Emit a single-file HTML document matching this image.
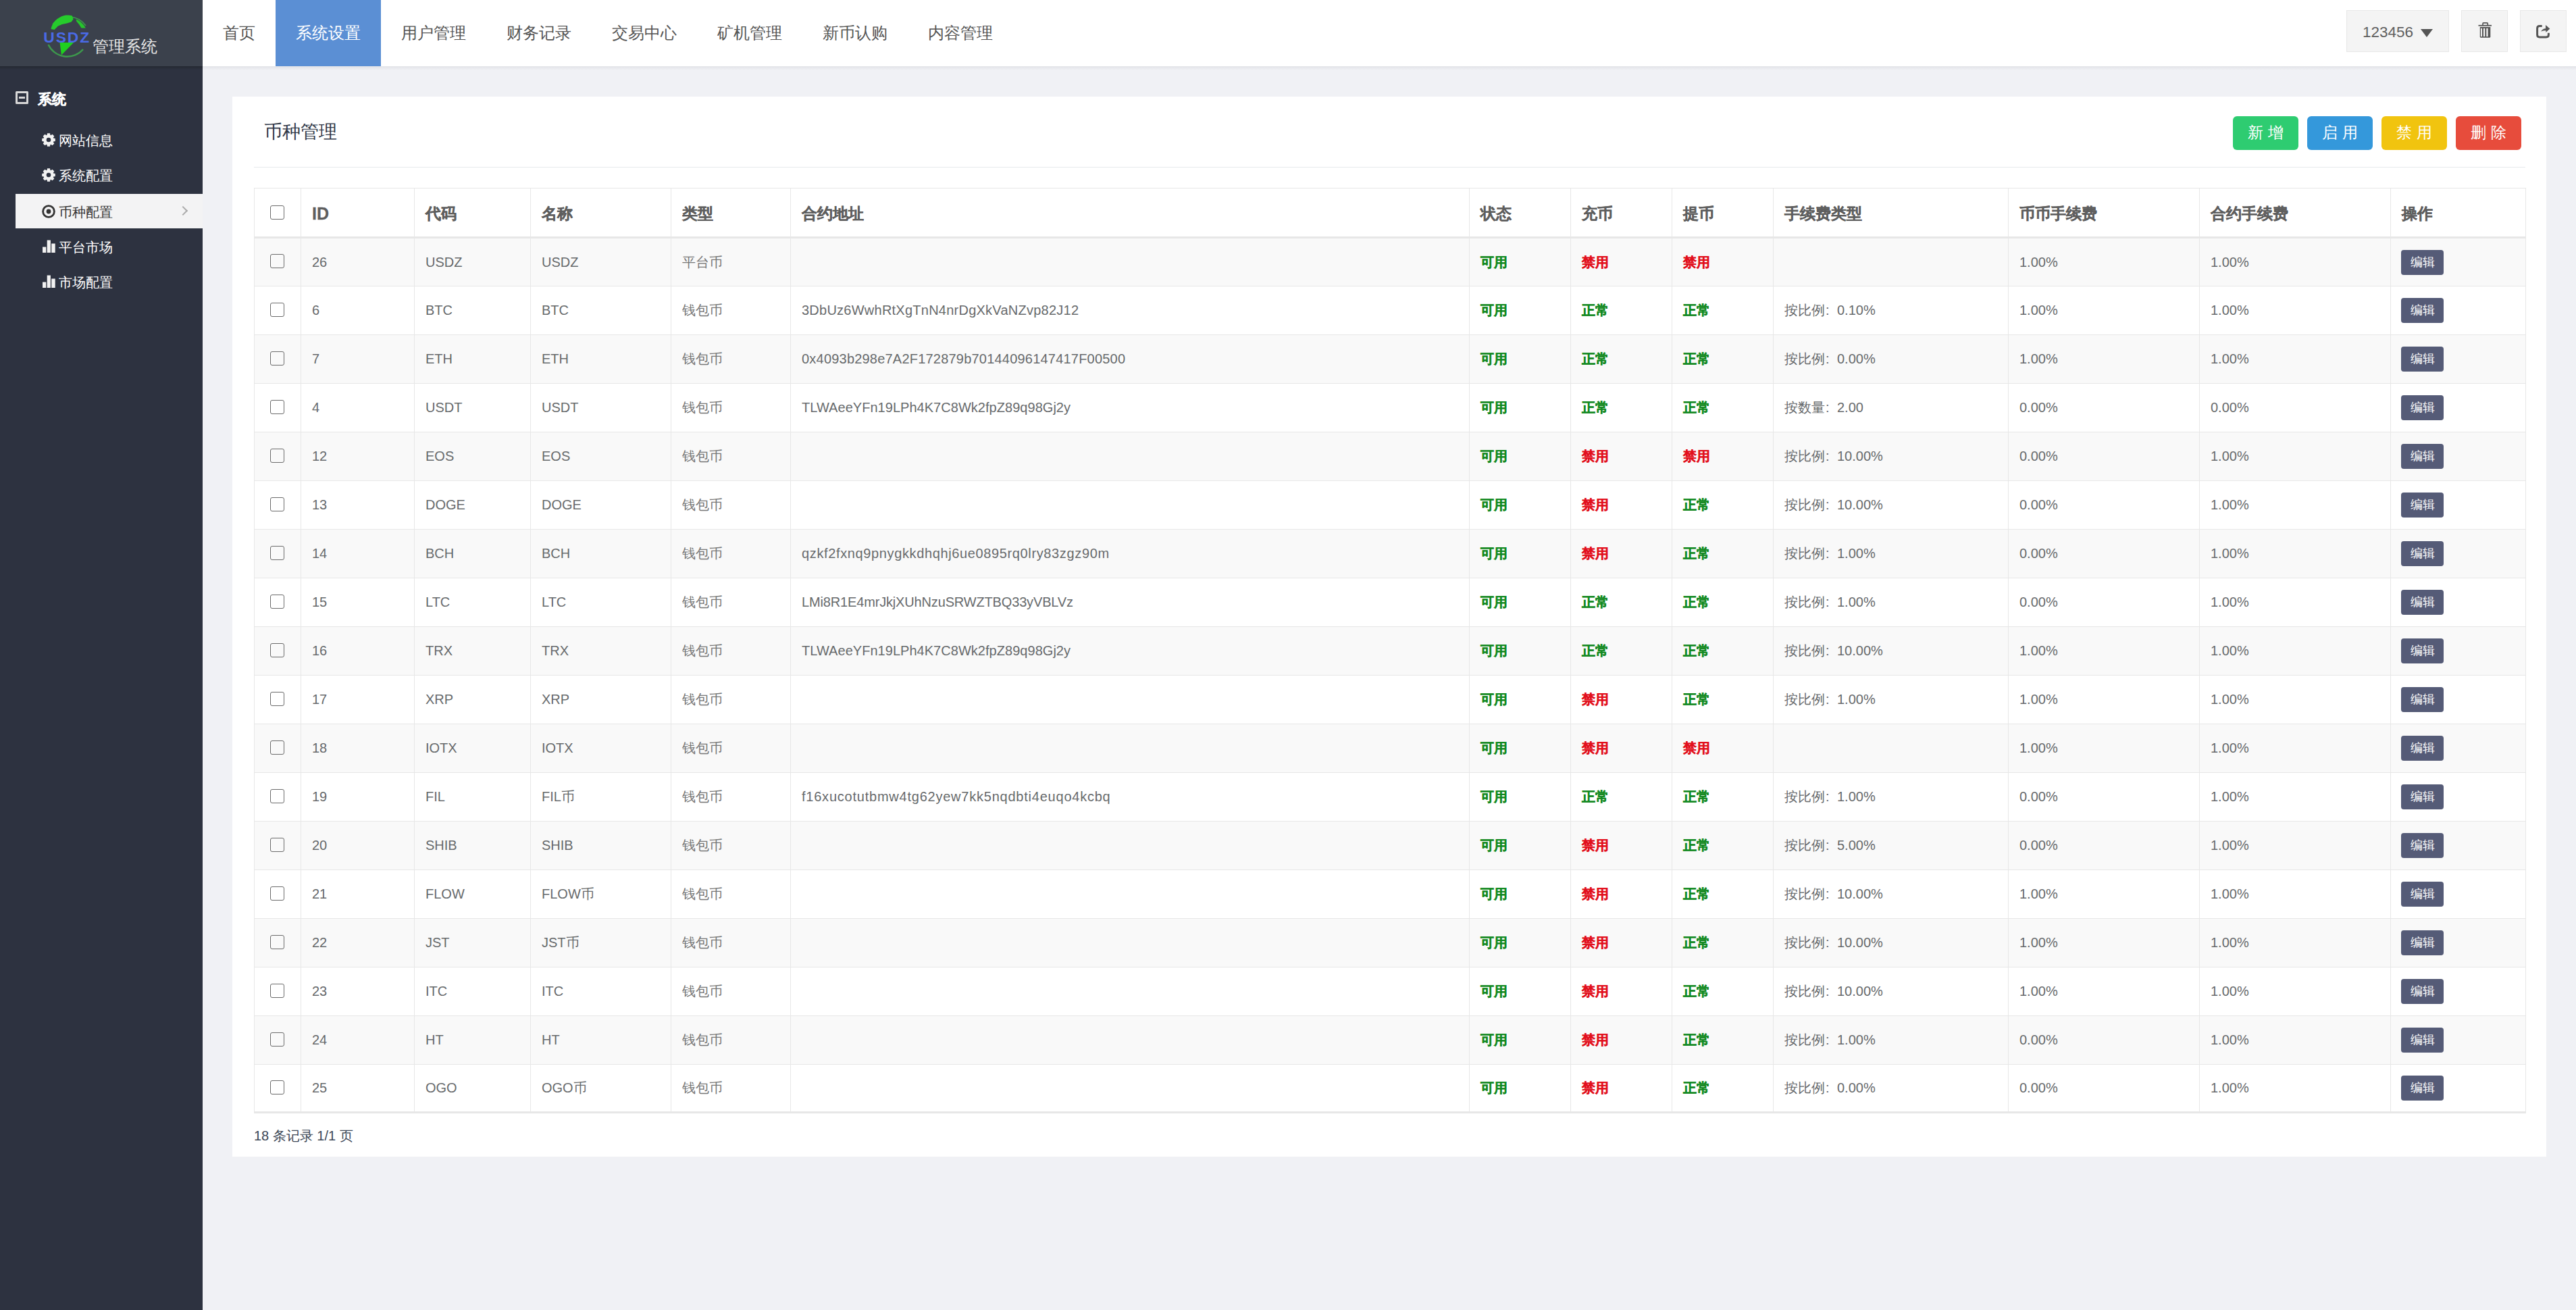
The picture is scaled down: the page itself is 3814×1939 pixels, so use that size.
<!DOCTYPE html>
<html><head><meta charset="utf-8"><title>币种管理</title>
<style>
*{box-sizing:border-box;margin:0;padding:0}
html,body{width:3814px;height:1939px;overflow:hidden}
body{background:#f0f1f5;font-family:"Liberation Sans",sans-serif;color:#676a6c;position:relative}
.side{position:absolute;left:0;top:0;width:300px;height:1939px;background:#2d3240}
.logo{position:absolute;left:0;top:0;width:300px;height:98px;background:#3b414c}
.logo svg{position:absolute;left:0;top:0}
.sshadow{position:absolute;left:0;top:98px;width:300px;height:5px;background:linear-gradient(#242831,#2d3240)}
.grp{position:absolute;left:23px;top:134.5px;height:24px;color:#fff;font-weight:bold;font-size:21px;line-height:24px;-webkit-text-stroke:0.4px #fff}
.grp .mi{position:absolute;left:0;top:0.5px;width:18.5px;height:18.5px;border:3px solid #d8d8d8;border-radius:1.5px}
.grp .mi:after{content:"";position:absolute;left:1.5px;top:4.5px;width:9.5px;height:3.5px;background:#d8d8d8}
.grp span{position:absolute;left:33px;top:0;white-space:nowrap}
.mitem{position:absolute;left:23px;width:277px;height:51px;color:#fff;font-size:19.5px;line-height:51px}
.mitem span{position:absolute;left:64px;top:1.5px;white-space:nowrap}
.mitem svg{position:absolute;left:39px;top:16px}
.mitem.on{background:#f3f3f4;color:#333}
.chev{position:absolute;left:243px;top:20px;width:10px;height:10px;border-right:2px solid #aaa;border-top:2px solid #aaa;transform:rotate(45deg)}
.hdr{position:absolute;left:300px;top:0;width:3514px;height:98px;background:#fff}
.hshadow{position:absolute;left:300px;top:98px;width:3514px;height:6px;background:linear-gradient(#e2e3e8,#f0f1f5)}
.tab{position:absolute;top:0;height:98px;line-height:98px;font-size:24px;color:#555;text-align:center;white-space:nowrap}
.tab.on{background:#5b8fd4;color:#fff}
.hb{position:absolute;top:15px;height:62px;background:#f4f4f4;border:1px solid #e8e8e8;color:#555}
.card{position:absolute;left:344px;top:143px;width:3426px;height:1569px;background:#fff}
.ttl{position:absolute;left:391px;top:177px;font-size:27px;line-height:36px;color:#2f3848;white-space:nowrap}
.btn{position:absolute;top:172px;width:97px;height:50px;border-radius:6px;color:#fff;font-size:22.5px;line-height:50px;text-align:center;white-space:nowrap}
.btn i{font-style:normal;margin-right:7.5px}
.divd{position:absolute;left:376px;top:247px;width:3363px;height:1px;background:#e7eaec}
.tb{position:absolute;left:376px;top:278px;width:3363px;border-collapse:collapse;table-layout:fixed;font-size:20px;color:#676a6c}
.tb th,.tb td{border:1px solid #e7e7e7;text-align:left;padding:0 0 0 16px;white-space:nowrap;overflow:hidden}
.tb th{height:73px;font-size:22.5px;font-weight:bold;color:#5e5e5e;-webkit-text-stroke:0.3px #5e5e5e;padding-top:3px;border-bottom:3px solid #e7e7e7}
.tb td{height:72px}
.tb tr.s td{background:#f9f9f9}
.tb tbody tr:last-child td{border-bottom:3px solid #e7e7e7;height:71px}
.cb{display:inline-block;width:21px;height:21px;border:1.5px solid #6b6b6b;border-radius:3px;vertical-align:middle;margin-left:7px;margin-top:-3px;position:relative;top:-1px}
.g{color:#138a22;-webkit-text-stroke:0.35px #138a22}
.r{color:#e2101c;-webkit-text-stroke:0.35px #e2101c}
.eb{display:inline-block;width:63px;height:37px;line-height:37px;background:#555b77;color:#fff;border-radius:4px;text-align:center;font-size:18px;margin-left:-1px}
.foot{position:absolute;left:376px;top:1666px;font-size:20px;line-height:30px;color:#3b4655;white-space:nowrap}
.uname{position:absolute;left:23px;top:1.5px;line-height:60px;font-size:22.5px;color:#606060}
.caret{position:absolute;left:109px;top:27px}
.t{color:#777}
.idh{font-size:25px}
.fc{font-style:normal;display:inline-block;width:18px;padding-left:1px}

</style></head><body>
<div class="side">
  <div class="logo">
    <svg width="300" height="98" viewBox="0 0 300 98">
      <path d="M78 36 A31 31 0 0 1 127 38" fill="none" stroke="#3d9a4c" stroke-width="1.6"/>
      <path d="M71.5 66 A31 31 0 0 0 123 73" fill="none" stroke="#3d9a4c" stroke-width="2.4"/>
      <path d="M75.5 43 C77 34 84 26 95 23 C99 22.3 104 22.5 107 23.5 L108.5 28.5 L105.5 32.5 L99 34.5 L92 36 L86 38.5 L80.5 44 Z" fill="#26cc2c"/>
      <path d="M112.5 28.5 C119 31 124 36 126.8 41.5 L120.5 41.5 L117 36 L113.5 32 Z" fill="#26c42c"/>
      <path d="M88.5 63 L109 63 L91 81.5 Z" fill="#1fd01f"/>
      <text x="64.3" y="63.2" font-family="Liberation Sans" font-weight="bold" font-size="22.8" fill="#4a6ae6" letter-spacing="1.9">USDZ</text>
      <text x="137" y="76.8" font-size="24.2" fill="#e6e6e6">管理系统</text>
    </svg>
  </div>
  <div class="sshadow"></div>
  <div class="grp"><i class="mi"></i><span>系统</span></div>
  <div class="mitem" style="top:181px"><svg width="20" height="20" viewBox="0 0 20 20"><path d="M17.19 7.54 L19.80 8.01 L19.80 11.99 L17.19 12.46 L16.83 13.34 L18.33 15.53 L15.53 18.33 L13.34 16.83 L12.46 17.19 L11.99 19.80 L8.01 19.80 L7.54 17.19 L6.66 16.83 L4.47 18.33 L1.67 15.53 L3.17 13.34 L2.81 12.46 L0.20 11.99 L0.20 8.01 L2.81 7.54 L3.17 6.66 L1.67 4.47 L4.47 1.67 L6.66 3.17 L7.54 2.81 L8.01 0.20 L11.99 0.20 L12.46 2.81 L13.34 3.17 L15.53 1.67 L18.33 4.47 L16.83 6.66Z" fill="#f2f2f2"/><circle cx="10" cy="10" r="3.3" fill="#2d3240"/></svg><span>网站信息</span></div>
  <div class="mitem" style="top:233px"><svg width="20" height="20" viewBox="0 0 20 20"><path d="M17.19 7.54 L19.80 8.01 L19.80 11.99 L17.19 12.46 L16.83 13.34 L18.33 15.53 L15.53 18.33 L13.34 16.83 L12.46 17.19 L11.99 19.80 L8.01 19.80 L7.54 17.19 L6.66 16.83 L4.47 18.33 L1.67 15.53 L3.17 13.34 L2.81 12.46 L0.20 11.99 L0.20 8.01 L2.81 7.54 L3.17 6.66 L1.67 4.47 L4.47 1.67 L6.66 3.17 L7.54 2.81 L8.01 0.20 L11.99 0.20 L12.46 2.81 L13.34 3.17 L15.53 1.67 L18.33 4.47 L16.83 6.66Z" fill="#f2f2f2"/><circle cx="10" cy="10" r="3.3" fill="#2d3240"/></svg><span>系统配置</span></div>
  <div class="mitem on" style="top:287px"><svg width="20" height="20" viewBox="0 0 20 20"><circle cx="10" cy="10" r="8.4" fill="none" stroke="#333" stroke-width="2.8"/><circle cx="10" cy="10" r="3.4" fill="#333"/></svg><span>币种配置</span><i class="chev"></i></div>
  <div class="mitem" style="top:339px"><svg width="20" height="20" viewBox="0 0 20 20"><rect x="1" y="10.5" width="5.3" height="8.5" fill="#f2f2f2"/><rect x="7.7" y="0.5" width="5.2" height="18.5" fill="#f2f2f2"/><rect x="14.2" y="5.5" width="5.5" height="13.5" fill="#f2f2f2"/></svg><span>平台市场</span></div>
  <div class="mitem" style="top:391px"><svg width="20" height="20" viewBox="0 0 20 20"><rect x="1" y="10.5" width="5.3" height="8.5" fill="#f2f2f2"/><rect x="7.7" y="0.5" width="5.2" height="18.5" fill="#f2f2f2"/><rect x="14.2" y="5.5" width="5.5" height="13.5" fill="#f2f2f2"/></svg><span>市场配置</span></div>
</div>
<div class="hdr"></div>
<div class="hshadow"></div>
<div class="tab" style="left:300px;width:108px">首页</div>
<div class="tab on" style="left:408px;width:156px">系统设置</div>
<div class="tab" style="left:564px;width:156px">用户管理</div>
<div class="tab" style="left:720px;width:156px">财务记录</div>
<div class="tab" style="left:876px;width:156px">交易中心</div>
<div class="tab" style="left:1032px;width:156px">矿机管理</div>
<div class="tab" style="left:1188px;width:156px">新币认购</div>
<div class="tab" style="left:1344px;width:156px">内容管理</div>
<div class="hb" style="left:3474px;width:152px"><span class="uname">123456</span><svg class="caret" width="18" height="12" viewBox="0 0 18 12"><path d="M0 0 H18 L9 12 Z" fill="#555"/></svg></div>
<div class="hb" style="left:3644px;width:69px"><svg style="position:absolute;left:24px;top:17px" width="21" height="24" viewBox="0 0 21 24"><path d="M7 4.5 V2.1 Q7 0.9 8.2 0.9 H13.1 Q14.3 0.9 14.3 2.1 V4.5" fill="none" stroke="#555" stroke-width="1.7"/><rect x="0.5" y="3.9" width="19.5" height="1.8" fill="#555"/><path d="M2.8 7.1 H18.3 V21.3 Q18.3 22.8 16.8 22.8 H4.3 Q2.8 22.8 2.8 21.3 Z" fill="#555"/><rect x="4.1" y="8.9" width="1.9" height="12.2" fill="#f4f4f4"/><rect x="8" y="8.9" width="2.3" height="12.2" fill="#f4f4f4"/><rect x="12.3" y="8.9" width="2.3" height="12.2" fill="#f4f4f4"/></svg></div>
<div class="hb" style="left:3731px;width:69px"><svg style="position:absolute;left:23px;top:20px" width="22" height="21" viewBox="0 0 22 21"><path d="M8.7 2.5 H5 Q1.6 2.5 1.6 5.9 V15.5 Q1.6 18.9 5 18.9 H15 Q18.4 18.9 18.4 15.5 V12.8" fill="none" stroke="#555" stroke-width="3"/><path d="M7.2 10.8 C8.6 7.8 11 6.3 14 6.3 V0.9 L20.3 6.4 L14.4 12 V9.2 C11.5 9.2 9.3 9.6 7.2 10.8 Z" fill="#555"/></svg></div>
<div class="card"></div>
<div class="ttl">币种管理</div>
<div class="btn" style="left:3306px;background:#2ecc71"><i>新</i>增</div>
<div class="btn" style="left:3416px;background:#3498db"><i>启</i>用</div>
<div class="btn" style="left:3526px;background:#f1c40f"><i>禁</i>用</div>
<div class="btn" style="left:3636px;background:#e74c3c"><i>删</i>除</div>
<div class="divd"></div>
<table class="tb"><colgroup><col style="width:69px"><col style="width:168px"><col style="width:172px"><col style="width:208px"><col style="width:177px"><col style="width:1005px"><col style="width:150px"><col style="width:150px"><col style="width:150px"><col style="width:348px"><col style="width:283px"><col style="width:283px"><col style="width:200px"></colgroup><thead><tr><th><i class="cb"></i></th><th><span class="idh">ID</span></th><th>代码</th><th>名称</th><th>类型</th><th>合约地址</th><th>状态</th><th>充币</th><th>提币</th><th>手续费类型</th><th>币币手续费</th><th>合约手续费</th><th>操作</th></tr></thead><tbody><tr class="s"><td><i class="cb"></i></td><td>26</td><td>USDZ</td><td>USDZ</td><td class="t">平台币</td><td></td><td><b class="g">可用</b></td><td><b class="r">禁用</b></td><td><b class="r">禁用</b></td><td></td><td>1.00%</td><td>1.00%</td><td><span class="eb">编辑</span></td></tr><tr class=""><td><i class="cb"></i></td><td>6</td><td>BTC</td><td>BTC</td><td class="t">钱包币</td><td style="letter-spacing:0.243px">3DbUz6WwhRtXgTnN4nrDgXkVaNZvp82J12</td><td><b class="g">可用</b></td><td><b class="g">正常</b></td><td><b class="g">正常</b></td><td>按比例<i class=fc>:</i>0.10%</td><td>1.00%</td><td>1.00%</td><td><span class="eb">编辑</span></td></tr><tr class="s"><td><i class="cb"></i></td><td>7</td><td>ETH</td><td>ETH</td><td class="t">钱包币</td><td style="letter-spacing:0.210px">0x4093b298e7A2F172879b70144096147417F00500</td><td><b class="g">可用</b></td><td><b class="g">正常</b></td><td><b class="g">正常</b></td><td>按比例<i class=fc>:</i>0.00%</td><td>1.00%</td><td>1.00%</td><td><span class="eb">编辑</span></td></tr><tr class=""><td><i class="cb"></i></td><td>4</td><td>USDT</td><td>USDT</td><td class="t">钱包币</td><td style="letter-spacing:0.035px">TLWAeeYFn19LPh4K7C8Wk2fpZ89q98Gj2y</td><td><b class="g">可用</b></td><td><b class="g">正常</b></td><td><b class="g">正常</b></td><td>按数量<i class=fc>:</i>2.00</td><td>0.00%</td><td>0.00%</td><td><span class="eb">编辑</span></td></tr><tr class="s"><td><i class="cb"></i></td><td>12</td><td>EOS</td><td>EOS</td><td class="t">钱包币</td><td></td><td><b class="g">可用</b></td><td><b class="r">禁用</b></td><td><b class="r">禁用</b></td><td>按比例<i class=fc>:</i>10.00%</td><td>0.00%</td><td>1.00%</td><td><span class="eb">编辑</span></td></tr><tr class=""><td><i class="cb"></i></td><td>13</td><td>DOGE</td><td>DOGE</td><td class="t">钱包币</td><td></td><td><b class="g">可用</b></td><td><b class="r">禁用</b></td><td><b class="g">正常</b></td><td>按比例<i class=fc>:</i>10.00%</td><td>0.00%</td><td>1.00%</td><td><span class="eb">编辑</span></td></tr><tr class="s"><td><i class="cb"></i></td><td>14</td><td>BCH</td><td>BCH</td><td class="t">钱包币</td><td style="letter-spacing:0.631px">qzkf2fxnq9pnygkkdhqhj6ue0895rq0lry83zgz90m</td><td><b class="g">可用</b></td><td><b class="r">禁用</b></td><td><b class="g">正常</b></td><td>按比例<i class=fc>:</i>1.00%</td><td>0.00%</td><td>1.00%</td><td><span class="eb">编辑</span></td></tr><tr class=""><td><i class="cb"></i></td><td>15</td><td>LTC</td><td>LTC</td><td class="t">钱包币</td><td style="letter-spacing:-0.156px">LMi8R1E4mrJkjXUhNzuSRWZTBQ33yVBLVz</td><td><b class="g">可用</b></td><td><b class="g">正常</b></td><td><b class="g">正常</b></td><td>按比例<i class=fc>:</i>1.00%</td><td>0.00%</td><td>1.00%</td><td><span class="eb">编辑</span></td></tr><tr class="s"><td><i class="cb"></i></td><td>16</td><td>TRX</td><td>TRX</td><td class="t">钱包币</td><td style="letter-spacing:0.035px">TLWAeeYFn19LPh4K7C8Wk2fpZ89q98Gj2y</td><td><b class="g">可用</b></td><td><b class="g">正常</b></td><td><b class="g">正常</b></td><td>按比例<i class=fc>:</i>10.00%</td><td>1.00%</td><td>1.00%</td><td><span class="eb">编辑</span></td></tr><tr class=""><td><i class="cb"></i></td><td>17</td><td>XRP</td><td>XRP</td><td class="t">钱包币</td><td></td><td><b class="g">可用</b></td><td><b class="r">禁用</b></td><td><b class="g">正常</b></td><td>按比例<i class=fc>:</i>1.00%</td><td>1.00%</td><td>1.00%</td><td><span class="eb">编辑</span></td></tr><tr class="s"><td><i class="cb"></i></td><td>18</td><td>IOTX</td><td>IOTX</td><td class="t">钱包币</td><td></td><td><b class="g">可用</b></td><td><b class="r">禁用</b></td><td><b class="r">禁用</b></td><td></td><td>1.00%</td><td>1.00%</td><td><span class="eb">编辑</span></td></tr><tr class=""><td><i class="cb"></i></td><td>19</td><td>FIL</td><td>FIL币</td><td class="t">钱包币</td><td style="letter-spacing:0.772px">f16xucotutbmw4tg62yew7kk5nqdbti4euqo4kcbq</td><td><b class="g">可用</b></td><td><b class="g">正常</b></td><td><b class="g">正常</b></td><td>按比例<i class=fc>:</i>1.00%</td><td>0.00%</td><td>1.00%</td><td><span class="eb">编辑</span></td></tr><tr class="s"><td><i class="cb"></i></td><td>20</td><td>SHIB</td><td>SHIB</td><td class="t">钱包币</td><td></td><td><b class="g">可用</b></td><td><b class="r">禁用</b></td><td><b class="g">正常</b></td><td>按比例<i class=fc>:</i>5.00%</td><td>0.00%</td><td>1.00%</td><td><span class="eb">编辑</span></td></tr><tr class=""><td><i class="cb"></i></td><td>21</td><td>FLOW</td><td>FLOW币</td><td class="t">钱包币</td><td></td><td><b class="g">可用</b></td><td><b class="r">禁用</b></td><td><b class="g">正常</b></td><td>按比例<i class=fc>:</i>10.00%</td><td>1.00%</td><td>1.00%</td><td><span class="eb">编辑</span></td></tr><tr class="s"><td><i class="cb"></i></td><td>22</td><td>JST</td><td>JST币</td><td class="t">钱包币</td><td></td><td><b class="g">可用</b></td><td><b class="r">禁用</b></td><td><b class="g">正常</b></td><td>按比例<i class=fc>:</i>10.00%</td><td>1.00%</td><td>1.00%</td><td><span class="eb">编辑</span></td></tr><tr class=""><td><i class="cb"></i></td><td>23</td><td>ITC</td><td>ITC</td><td class="t">钱包币</td><td></td><td><b class="g">可用</b></td><td><b class="r">禁用</b></td><td><b class="g">正常</b></td><td>按比例<i class=fc>:</i>10.00%</td><td>1.00%</td><td>1.00%</td><td><span class="eb">编辑</span></td></tr><tr class="s"><td><i class="cb"></i></td><td>24</td><td>HT</td><td>HT</td><td class="t">钱包币</td><td></td><td><b class="g">可用</b></td><td><b class="r">禁用</b></td><td><b class="g">正常</b></td><td>按比例<i class=fc>:</i>1.00%</td><td>0.00%</td><td>1.00%</td><td><span class="eb">编辑</span></td></tr><tr class=""><td><i class="cb"></i></td><td>25</td><td>OGO</td><td>OGO币</td><td class="t">钱包币</td><td></td><td><b class="g">可用</b></td><td><b class="r">禁用</b></td><td><b class="g">正常</b></td><td>按比例<i class=fc>:</i>0.00%</td><td>0.00%</td><td>1.00%</td><td><span class="eb">编辑</span></td></tr></tbody></table>
<div class="foot">18 条记录 1/1 页</div>

</body></html>
